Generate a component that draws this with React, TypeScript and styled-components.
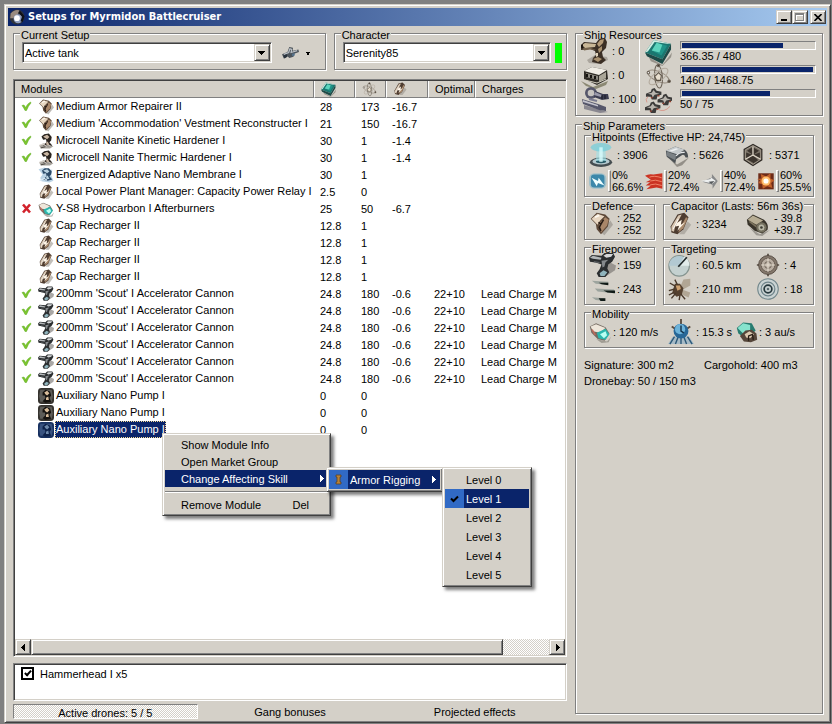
import React from "react";
import styled, { createGlobalStyle, css } from "styled-components";

const face = "#d4d0c8";
const navy = "#0a246a";

const raised = css`
  background: ${face};
  border: 1px solid;
  border-color: ${face} #404040 #404040 ${face};
  box-shadow: inset 1px 1px #fff, inset -1px -1px #808080;
`;

const sunken = css`
  border: 1px solid;
  border-color: #808080 #fff #fff #808080;
  box-shadow: inset 1px 1px #404040, inset -1px -1px ${face};
  padding: 1px;
`;

const checker = css`
  background: repeating-conic-gradient(#fff 0 25%, ${face} 0 50%) 0 0 / 2px 2px;
`;

const GlobalStyle = createGlobalStyle`
  *, *::before, *::after { box-sizing: border-box; }
  body { margin: 0; background: #808080; }
  body, button, select, input, table {
    font: 11px/12px "Liberation Sans", Arial, sans-serif;
    color: #000;
  }
  button { padding: 0; border: 0; background: none; }
`;

const Desktop = styled.div`
  min-height: 100vh;
  padding: 4px 1px 1px 4px;
  display: flex;
`;

const Window = styled.main`
  flex: 1;
  min-width: 0;
  display: flex;
  flex-direction: column;
  padding: 3px;
  ${raised}
`;

const TitleBar = styled.header`
  height: 18px;
  display: flex;
  align-items: center;
  gap: 2px;
  padding: 0 1px;
  background: linear-gradient(90deg, ${navy}, #a6caf0);
`;

const Title = styled.h1`
  flex: 1;
  margin: 0;
  padding-left: 1px;
  color: #fff;
  font: bold 11px/16px "DejaVu Sans Condensed", "DejaVu Sans", sans-serif;
`;

const CaptionGroup = styled.div`
  display: flex;
`;

const CaptionButton = styled.button`
  ${raised}
  width: 16px;
  height: 14px;
  display: grid;
  place-items: center;
`;

const Client = styled.div`
  flex: 1;
  display: grid;
  grid-template-columns: minmax(0, 1fr) 248px;
  gap: 8px;
  padding: 0 4px 0 5px;
`;

const MainColumn = styled.section`
  display: flex;
  flex-direction: column;
  min-width: 0;
`;

const SideColumn = styled.aside`
  display: flex;
  flex-direction: column;
  gap: 1px;
  padding-bottom: 5px;
`;

const Group = styled.fieldset<{ $grow?: number; $pad?: string }>`
  min-width: 0;
  margin: 0;
  padding: ${(p) => p.$pad ?? "0 4px 3px"};
  border: 1px solid #808080;
  box-shadow: 1px 1px #fff, inset 1px 1px #fff;
  ${(p) => p.$grow && `flex: ${p.$grow} 1 0;`}
`;

const Legend = styled.legend<{ $inset?: number }>`
  margin-left: ${(p) => p.$inset ?? 2}px;
  padding: 3px 1px 0;
  height: 15px;
  line-height: 12px;
  white-space: nowrap;
  background: linear-gradient(${face}, ${face}) 0 100% / 100% 11px no-repeat;
`;

const Selectors = styled.div`
  display: flex;
  gap: 8px;
  margin-bottom: 9px;
`;

const ControlRow = styled.div`
  display: flex;
  align-items: center;
  gap: 4px;
  padding-top: 1px;
`;

const Combo = styled.div`
  ${sunken}
  flex: 1;
  min-width: 0;
  height: 21px;
  display: flex;
  background: #fff;
`;

const ComboSelect = styled.select`
  flex: 1;
  min-width: 0;
  appearance: none;
  border: 0;
  padding: 0 1px;
  background: #fff;
  outline: 0;
`;

const ComboArrow = styled.span`
  ${raised}
  width: 16px;
  display: grid;
  place-items: center;
  pointer-events: none;
`;

const SetupMenuButton = styled.button`
  width: 41px;
  height: 20px;
  display: flex;
  align-items: center;
  gap: 6px;
  padding-left: 6px;
`;

const StatusLight = styled.span`
  width: 7px;
  height: 20px;
  background: #0f0;
`;

const ModuleList = styled.div`
  ${sunken}
  flex: 1;
  display: flex;
  flex-direction: column;
  background: #fff;
`;

const ListBody = styled.div`
  flex: 1;
  overflow: hidden;
`;

const ModuleTable = styled.table`
  width: 100%;
  table-layout: fixed;
  border-collapse: separate;
  border-spacing: 0;
`;

const HeadCell = styled.th<{ $w?: number }>`
  ${(p) => p.$w && `width: ${p.$w}px;`}
  height: 17px;
  padding: 0 0 0 6px;
  background: ${face};
  border-left: 1px solid #fff;
  border-right: 1px solid #808080;
  border-bottom: 1px solid #808080;
  font-weight: normal;
  text-align: left;
  white-space: nowrap;
  line-height: 12px;
  svg { display: block; }
  &:first-child { border-left: 0; }
  &:last-child { border-right: 0; }
`;

const Cell = styled.td`
  height: 17px;
  padding: 0 0 0 6px;
  white-space: nowrap;
  overflow: hidden;
`;

const NameCell = styled.td`
  position: relative;
  height: 17px;
  padding: 0 0 0 6px;
`;

const NameLine = styled.div`
  display: grid;
  grid-template-columns: 16px 16px max-content;
  align-items: center;
  height: 17px;
  column-gap: 1px;
  margin-right: -10px;
  svg { display: block; }
`;

const ModuleName = styled.span<{ $selected?: boolean }>`
  padding: 2px 0;
  line-height: 11px;
  white-space: nowrap;
  border: 1px solid transparent;
  ${(p) =>
    p.$selected &&
    css`
      background: ${navy};
      color: #fff;
      border: 1px dotted #f5db95;
    `}
`;

const ScrollBar = styled.div`
  height: 16px;
  display: flex;
  ${checker}
`;

const ScrollButton = styled.button`
  ${raised}
  width: 16px;
  display: grid;
  place-items: center;
`;

const ScrollThumb = styled.div`
  ${raised}
  flex: 473;
`;

const ScrollTrack = styled.div`
  flex: 46;
`;

const DronePanel = styled.div`
  ${sunken}
  height: 38px;
  margin: 6px 0 3px;
  background: #fff;
`;

const DroneLabel = styled.label`
  display: flex;
  align-items: center;
  gap: 6px;
  padding: 2px 6px;
`;

const DroneCheck = styled.input`
  appearance: none;
  width: 13px;
  height: 13px;
  margin: 0;
  border: 2px solid #000;
  display: grid;
  place-items: center;
  &:checked::after {
    content: "";
    width: 4px;
    height: 7px;
    margin-bottom: 2px;
    border: solid #000;
    border-width: 0 2px 2px 0;
    transform: rotate(42deg);
  }
`;

const TabBar = styled.nav`
  display: grid;
  grid-template-columns: repeat(3, 1fr);
`;

const TabButton = styled.button<{ $active?: boolean }>`
  height: 15px;
  border: 1px solid transparent;
  ${(p) =>
    p.$active &&
    css`
      ${checker}
      border-color: #808080 #fff #fff #808080;
      padding-top: 2px;
    `}
`;

const MenuPanel = styled.ul<{ $place: "context" | "side"; $shift?: number; $width: number }>`
  ${raised}
  position: absolute;
  z-index: 2;
  margin: 0;
  padding: 2px;
  list-style: none;
  width: ${(p) => p.$width}px;
  box-shadow: inset 1px 1px #fff, inset -1px -1px #808080, 3px 3px 3px rgba(0, 0, 0, 0.5);
  ${(p) =>
    p.$place === "context"
      ? css`
          top: 12px;
          left: 147px;
        `
      : css`
          top: -3px;
          left: calc(100% + ${p.$shift ?? 0}px);
        `}
`;

const MenuEntry = styled.li`
  position: relative;
`;

const MenuItem = styled.button<{ $hot?: boolean; $tall?: boolean }>`
  width: 100%;
  height: ${(p) => (p.$tall ? 19 : 17)}px;
  display: grid;
  grid-template-columns: ${(p) => (p.$tall ? "19px 1fr auto" : "16px 1fr auto")};
  align-items: center;
  text-align: left;
  white-space: nowrap;
  ${(p) => p.$hot && `background: ${navy}; color: #fff;`}
`;

const MenuMark = styled.span<{ $hot?: boolean }>`
  align-self: stretch;
  display: grid;
  place-items: center;
  ${(p) => p.$hot && "background: #316ac5;"}
`;

const MenuText = styled.span<{ $wide?: boolean }>`
  padding-left: ${(p) => (p.$wide ? 2 : 0)}px;
`;

const Shortcut = styled.span`
  padding-right: 19px;
`;

const ArrowSlot = styled.span`
  padding-right: 3px;
  display: grid;
`;

const Separator = styled.li`
  height: 9px;
  display: flex;
  align-items: center;
  &::before {
    content: "";
    flex: 1;
    height: 2px;
    border-top: 1px solid #808080;
    border-bottom: 1px solid #fff;
  }
`;

const Resources = styled.div`
  display: grid;
  grid-template-columns: 59px 40px 1fr;
  grid-auto-rows: 24px;
  margin-top: -2px;
  padding-right: 2px;
`;

const Slots = styled.div`
  display: flex;
  align-items: center;
  gap: 3px;
  border-right: 1px solid #fff;
  white-space: nowrap;
`;

const IconSlot = styled.div`
  display: grid;
  place-items: center start;
  padding-left: 5px;
  height: 24px;
`;

const Meter = styled.div`
  display: flex;
  flex-direction: column;
  padding-top: 2px;
  line-height: 13px;
`;

const MeterTrack = styled.div`
  height: 9px;
  padding: 1px;
  border: 1px solid;
  border-color: #808080 #fff #fff #808080;
`;

const MeterFill = styled.div`
  height: 100%;
  background: ${navy};
`;

const Parameters = styled.div`
  margin-top: -4px;
`;

const PairRow = styled.div`
  display: grid;
  grid-template-columns: 71px 1fr;
  gap: 0 8px;
`;

const StatGrid = styled.div<{ $cols: string; $lift?: boolean }>`
  display: grid;
  grid-template-columns: ${(p) => p.$cols};
  grid-auto-rows: 24px;
  ${(p) => p.$lift && "margin-top: -2px;"}
`;

const Stat = styled.div<{ $gap?: number }>`
  display: flex;
  align-items: center;
  gap: ${(p) => p.$gap ?? 4}px;
  white-space: nowrap;
  svg { flex: none; display: block; }
`;

const Lines = styled.div`
  display: flex;
  flex-direction: column;
`;

const ResistRow = styled.div`
  display: grid;
  grid-template-columns: 56px 56px 56px 1fr;
  padding-top: 2px;
`;

const ResistBar = styled.span`
  width: 3px;
  height: 22px;
  border: 1px solid;
  border-color: #fff #808080 #808080 #fff;
`;

const Footnotes = styled.div`
  display: grid;
  grid-template-columns: 120px 1fr;
  padding-top: 9px;
  line-height: 16px;
`;

/* ---------- drawings ---------- */

const art: Record<string, React.ReactNode> = {
  turret: (
    <>
      <path d="M6 23l8-5 12 2 1 3-9 4-10-1z" fill="#8d8880" opacity=".6" />
      <path d="M0 8l3-3 12 1 3-4 6-1 2 4-1 6-4 4 1 5 3 3-5 4-9-2 1-4 3-3-1-4-5-2-9 1z" fill="#3b2f25" />
      <path d="M1 8l3-2 11 1-1 3-10 1z" fill="#c9b797" />
      <path d="M16 7l3-4 4-1-1 4-4 4z" fill="#b39a78" />
      <path d="M2 11l8 0 5 2-6-.500-6 1z" fill="#75634d" />
      <path d="M17 12l4-3 0 4-3 3zM12 22l5-2 4 2-4 3z" fill="#a8906e" />
      <path d="M15 16l2 0 0 3-2 1z" fill="#e0d3ba" />
      <path d="M0 8l2-1 0 4-2 0z" fill="#1c1611" />
    </>
  ),
  gun: (
    <>
      <path d="M14 19l8-8 6 3-1 5-9 6z" fill="#6f6d69" opacity=".6" />
      <path d="M0 6l3-3 10 1 3-3 9 0 2 4-3 5-4 3-1 4 2 4-4 5-7 0-2-4 3-4 2-5-6-2-6-1z" fill="#2b2e30" />
      <path d="M1 6l3-2 9 2-1 2-8-1z" fill="#b2b6b8" />
      <path d="M15 4l3-2 7 0-2 3-5 1z" fill="#d6d8d9" />
      <path d="M13 9l7-1-3 3-1 4-2 1z" fill="#85898c" />
      <path d="M11 22l4-3 4 2-3 4-4 0z" fill="#8fb3bc" />
      <path d="M5 10l6 1" stroke="#5d6163" strokeWidth="1.5" />
    </>
  ),
  launcher: (
    <>
      <path d="M0 20l12 6 15-6-2 4-10 4-10-3z" fill="#5c5a3c" opacity=".6" />
      <path d="M3 10l8-4 15 3 1 9-11 6L3 18z" fill="#302d27" />
      <path d="M3 10l8-4 15 3-8 5z" fill="#f0ede5" />
      <path d="M5 12l12 3 0 4-12-3z" fill="#8b887f" />
      <path d="M6 13v3M10 14v3M14 15v3" stroke="#15130f" strokeWidth="2" />
      <path d="M18 15l7-4 0 6-7 4z" fill="#aaa698" />
      <path d="M4 19l12 3 9-4" stroke="#d0ccbd" strokeWidth="1" fill="none" />
    </>
  ),
  calibration: (
    <>
      <path d="M3 20l20 6 4 1-8 1-16-4z" fill="#8a8890" />
      <circle cx="10" cy="8" r="6" fill="#55566a" />
      <circle cx="10" cy="8" r="3.3" fill="#c7c4c0" />
      <path d="M14 6l8 3 5 0 1 5-7 1-8-3z" fill="#3c3d50" />
      <path d="M14 7l7 3-1 2-7-2z" fill="#9a9aab" />
      <path d="M1 14l16 5 8 3 0 4-7-1L2 19z" fill="#55566a" />
      <path d="M2 15l15 5 0 1.500L2 17z" fill="#c2c2cc" />
      <path d="M21 10v4M24 10v4" stroke="#151620" strokeWidth="1" />
      <path d="M8 14l8 2" stroke="#7a7b90" strokeWidth="2" />
    </>
  ),
  cpu: (
    <>
      <path d="M4 19l14 8 10-13-1 5-9 9-12-5z" fill="#6f6b62" opacity=".6" />
      <path d="M0 14L9 1l18 4-9 16z" fill="#1b7770" />
      <path d="M0 14l18 7v5L2 18zM18 21l9-16v6l-9 15z" fill="#1d4a47" />
      <path d="M0 14L9 1l18 4-4 0-13-2-7 10z" fill="#d0ece2" />
      <path d="M7 12l5-8 11 3-6 10z" fill="#1f9488" />
      <path d="M7 12l5-8 6 2-3 8z" fill="#5cd4bd" />
    </>
  ),
  power: (
    <g fill="none" stroke="#6d6459" strokeWidth="1.1">
      <ellipse cx="14" cy="14" rx="12" ry="5" transform="rotate(25 14 14)" stroke="#958b7e" />
      <ellipse cx="14" cy="14" rx="12" ry="4" transform="rotate(85 14 14)" />
      <ellipse cx="14" cy="14" rx="12" ry="5" transform="rotate(140 14 14)" stroke="#b5aca0" />
      <path d="M14 10l3 3-1 5-4 0-2-4z" fill="#e8dfcf" stroke="#5d5347" />
      <circle cx="14" cy="2.5" r="1.300" fill="#443b31" />
      <circle cx="3.500" cy="10" r="1.300" fill="#fff" />
      <circle cx="25" cy="19" r="1.300" fill="#443b31" />
    </g>
  ),
  drones: (
    <>
      {[[9, 6], [21, 12], [8, 20]].map(([x, y]) => (
        <g key={x} transform={`translate(${x} ${y})`}>
          <path d="M-8 1l5-2 1-3 3-1 2 3 5 1 0 3-4 1-1 4-5 0-1-3-5 0z" fill="#3c3b3a" />
          <path d="M-6 1l4-1 2-3 2 3 4 1-5 1-2 3-1-3z" fill="#b9b5ae" />
          <path d="M-3 5h2M4 3h2" stroke="#93402f" strokeWidth="1.500" />
        </g>
      ))}
      <path d="M13 23q7 4 13-3M3 10q-3 3-1 6" stroke="#d6988b" strokeWidth="1" fill="none" />
    </>
  ),
  shield: (
    <>
      <ellipse cx="14" cy="22.500" rx="13" ry="5.500" fill="#454d50" />
      <ellipse cx="14" cy="21.500" rx="10" ry="3.500" fill="#b5c9ce" />
      <ellipse cx="14" cy="21.500" rx="6" ry="2" fill="#2a5c68" />
      <path d="M9 5h10l1 16H8z" fill="#9fe3e9" opacity=".6" />
      <ellipse cx="14" cy="5" rx="12" ry="5" fill="#71cfdc" opacity=".7" />
      <path d="M12 5h4v17h-4z" fill="#d8fbfc" opacity=".8" />
    </>
  ),
  armor: (
    <>
      <path d="M5 18l9 7 14-8-8 9-6 2z" fill="#77736c" opacity=".7" />
      <path d="M1 9l11-5 11 4q4 3 4 9l-3 0q-1-4-4-3l-7 5-1 5L2 16z" fill="#4c5155" />
      <path d="M1 9l11-5 11 4-9 5z" fill="#c5cacc" />
      <path d="M2 10l11 4-1 6-10-5z" fill="#7b8185" />
      <path d="M13 15q4-5 10-4" stroke="#e8eaec" strokeWidth="1.500" fill="none" />
      <path d="M5 9l8-3 3 1-8 3z" fill="#eceeef" />
    </>
  ),
  structure: (
    <>
      <path d="M14 1l11 6v13l-11 7L3 20V7z" fill="#302b26" />
      <path d="M14 3l9 5v11l-9 6-9-6V8z" fill="#7b7368" stroke="#aca395" strokeWidth="1" />
      <path d="M14 14V5l7 4zM14 14l8-3v7zM14 14l6 6-6 4zM14 14v9l-7-4zM14 14l-8 4v-7zM14 14L7 9l6-4z" fill="#3b342d" />
      <path d="M14 4v10l9 5M14 14l-9 5" stroke="#d9d1c3" strokeWidth="1.500" fill="none" />
    </>
  ),
  em: (
    <>
      <rect x="0" y="2" width="27" height="24" rx="8" fill="#6ab2cd" opacity=".45" />
      <rect x="3" y="4" width="21" height="20" rx="5" fill="#2a7ea4" opacity=".85" />
      <path d="M4 9l10 5 1-5 9 12-10-4-2 5z" fill="#f1ffff" />
    </>
  ),
  thermal: (
    <>
      <path d="M0 6q6-4 13-2l14-2v24l-9-2-16 3 7-6-8 0 7-5-7 0 8-4z" fill="#cb3323" />
      <path d="M7 8q7-3 19 1M8 14q8-3 18 1M8 20q8-3 18 1" stroke="#f0866a" strokeWidth="1.500" fill="none" />
    </>
  ),
  kinetic: (
    <>
      <path d="M2 15L17 8V3l9 11-8 12v-6z" fill="#74777a" opacity=".8" />
      <path d="M0 14l15-3 0-3 8 6-8 6v-3z" fill="#eef0f0" />
      <path d="M12 15l9-1-5 5z" fill="#55595c" />
    </>
  ),
  explosive: (
    <>
      <rect x="2" y="2" width="24" height="25" fill="#6d2b18" />
      <path d="M0 11l7-1-1-7 8 4 7-5 0 8 6 3-5 4 2 8-8-3-7 4-1-7-6-2 3-4z" fill="#c2612a" />
      <circle cx="14" cy="14" r="7" fill="#ffbe6b" />
      <circle cx="14" cy="14" r="4" fill="#fff" />
    </>
  ),
  repair: (
    <>
      <path d="M14 24l11-14 3 5-10 12z" fill="#8f8b83" opacity=".6" />
      <path d="M2 8l7-7 10 2 5 5-2 9-8 9-5-6-1-6z" fill="#5e4939" />
      <path d="M3 8l7-6 8 3-5 5-3 5z" fill="#e8d7c2" />
      <path d="M12 13l7-7 4 3-2 7-7 8z" fill="#a98669" />
      <path d="M11 12l3 2-2 4 2 4M17 9l-3 5" stroke="#281b14" strokeWidth="1.800" fill="none" />
      <path d="M7 6l5-2" stroke="#fffaf2" strokeWidth="2" />
    </>
  ),
  hardener: (
    <>
      <path d="M2 22l8-4 17 5-6 4H5z" fill="#a5a19a" />
      <path d="M6 6l5-4 8-1 5 6-1 6-3 3 5 6-8 2-8-2 6-6-1-5-5 1z" fill="#29231f" />
      <path d="M9 6l7-3 4 4-4 4-5-3zM14 17l3-2 3 6-5 0z" fill="#c9b6a3" />
      <path d="M2 22l7-3 5 4 8-1" stroke="#d8d3cc" strokeWidth="2" fill="none" />
      <path d="M5 26l8-2" stroke="#3d3833" strokeWidth="1.500" />
    </>
  ),
  membrane: (
    <>
      <path d="M1 4l10-3 6 4 8 0-2 9 4 10-7 3-14-2-2-6 4-6z" fill="#8db6d4" opacity=".6" />
      <path d="M7 6l5-4 7 0 5 6-1 5-3 3 5 6-8 2-8-2 6-6-1-5-5 1z" fill="#2c4a68" />
      <path d="M9 6l7-2 4 4-4 3-5-3zM14 17l3-2 3 6-5 0z" fill="#b7d0e0" />
      <path d="M3 24l8-4 5 3" stroke="#dcebf5" strokeWidth="2" fill="none" />
    </>
  ),
  cap: (
    <>
      <path d="M13 26L23 11l4 4-8 11z" fill="#99958c" opacity=".6" />
      <path d="M3 17L11 3l8-2 5 5-6 14-7 6-7-2z" fill="#4e3c30" />
      <path d="M4 17l8-13 4-1-8 15-1 5-3-1z" fill="#d9c7b2" />
      <path d="M13 20l8-14 2 1-5 12-6 5z" fill="#a98a6d" />
      <path d="M10 13l6-4-1 6 5-3-9 10 2-6-4 1z" fill="#fff6e8" />
      <path d="M6 20l6-12" stroke="#fff" strokeWidth="1" />
    </>
  ),
  battery: (
    <>
      <path d="M4 18l12 8 12-5-9 7-7-1z" fill="#77736c" opacity=".6" />
      <path d="M1 9l7-6 13 6q6 5 4 12l-6 4-9-3-8-7z" fill="#38332a" />
      <path d="M2 9l6-5 12 6-8 5z" fill="#b7ad94" />
      <circle cx="18" cy="18" r="6" fill="#74705f" />
      <circle cx="18" cy="18" r="3.500" fill="#b9b7a6" />
      <circle cx="18" cy="18" r="1.500" fill="#3b3a32" />
      <path d="M4 11l8 6" stroke="#7c735d" strokeWidth="2" />
    </>
  ),
  volley: (
    <>
      <path d="M3 5l17 1v3l-13-1zM6 13l20 1v4l-17-2zM3 22l13 1v3l-9-1z" fill="#8f9894" opacity=".8" />
      <path d="M10 7h10v2.500l-7-1zM15 15h12v3l-8-1zM10 23h7v3h-5z" fill="#101a17" />
    </>
  ),
  radar: (
    <>
      <circle cx="13" cy="15" r="12" fill="#c4d1d0" stroke="#84938f" strokeWidth="1.300" />
      <path d="M1 15a12 12 0 0 1 18-10l-6 10z" fill="#b2c9d2" />
      <path d="M13 15L19 4a12 12 0 0 1 6 11z" fill="#e2eceb" />
      <path d="M12 16l10-11" stroke="#20292b" strokeWidth="2" />
    </>
  ),
  fly: (
    <>
      <path d="M14 12l4-9 8-1 0 8-9 5 9 3-2 6-9-4z" fill="#b1a695" />
      <path d="M8 8l6 0 4 5-2 8-6 2-5-5z" fill="#54402f" />
      <path d="M8 3l3 6M2 7l7 4M1 16l7-2M4 25l5-6M13 27l1-6M20 26l-5-6M1 21l6-3" stroke="#49382a" strokeWidth="1.600" />
      <path d="M9 10l5 0 1 4-4 2z" fill="#cda171" />
    </>
  ),
  sensor: (
    <>
      <path d="M14 1v26M1 14h26" stroke="#554b41" strokeWidth="2" />
      <circle cx="14" cy="14" r="11" fill="#85796d" stroke="#4d433a" />
      <circle cx="14" cy="14" r="8" fill="#b9aea2" stroke="#61554b" />
      <circle cx="14" cy="14" r="4" fill="none" stroke="#665b50" />
      <path d="M14 6v16M6 14h16" stroke="#e4dbce" strokeWidth="1.300" />
    </>
  ),
  rings: (
    <g fill="none" stroke="#506267">
      <circle cx="14" cy="14" r="12" fill="#c9d2d2" stroke="#71868b" strokeWidth="1.200" />
      <circle cx="14" cy="14" r="8" stroke="#6e8389" strokeWidth="1.400" />
      <circle cx="14" cy="14" r="4.500" stroke="#26383d" strokeWidth="2" />
      <circle cx="14" cy="14" r="1" fill="#1d2b30" />
    </g>
  ),
  thruster: (
    <>
      <path d="M9 23l14 3 5-6-3 7-9 1z" fill="#7f7b72" opacity=".6" />
      <path d="M1 7l8-4 12 5 5 8-6 9-9-2-8-8z" fill="#756b62" />
      <path d="M2 7l7-3 12 5-7 6-9-2z" fill="#eee6da" />
      <path d="M10 15l11-5 5 7-5 7-9-2z" fill="#2bb6ad" />
      <path d="M14 17l7-4 2 5-4 4z" fill="#bafff3" />
      <path d="M4 11l4 7" stroke="#c0695a" strokeWidth="2" />
    </>
  ),
  align: (
    <>
      <path d="M14 0v8M4 8l6 4M24 8l-6 4" stroke="#5b4c40" strokeWidth="2" />
      <path d="M5 19h18l5 8H0z" fill="#a6bac6" />
      <path d="M7 19l-5 8M11 19l-3 8M14 19v8M17 19l3 8M21 19l5 8" stroke="#2b5878" strokeWidth="1.500" />
      <circle cx="14" cy="13" r="8" fill="#276797" />
      <circle cx="13" cy="11" r="5.500" fill="#6db3da" />
      <path d="M14 7v6l3 2" stroke="#123149" strokeWidth="1.500" fill="none" />
    </>
  ),
  warp: (
    <>
      <path d="M1 9l8-7 11 1 5 9-8 8-8 0-6-4z" fill="#287c70" />
      <path d="M2 9l7-6 9 2 0 7-8 5z" fill="#86e3cd" />
      <path d="M5 19l7-7 8-1 6 5 1 8-8 3-9-1z" fill="#55463a" />
      <path d="M11 17l6-4 6 4-5 5-5-1z" fill="#dbc9af" />
      <path d="M16 25v-6l5-2 1 7" stroke="#251b14" strokeWidth="1.600" fill="none" />
    </>
  ),
  pump: (
    <>
      <rect x="0" y="0" width="28" height="28" rx="6" fill="#36332f" />
      <path d="M4 3h20l2 12-2 9H4L2 14z" fill="#5d5c58" />
      <path d="M8 8l5-5 8 3 2 7-3 4 3 7-10 2-5-3 5-5-1-5-4 0z" fill="#15120f" />
      <path d="M11 8l5-3 4 4-4 4-3-2zM14 17l4-2 1 6-5 0z" fill="#d9bd9b" />
    </>
  ),
  pumpSelected: (
    <>
      <rect x="0" y="0" width="28" height="28" rx="6" fill="#17305f" />
      <path d="M4 3h20l2 12-2 9H4L2 14z" fill="#38527f" />
      <path d="M8 8l5-5 8 3 2 7-3 4 3 7-10 2-5-3 5-5-1-5-4 0z" fill="#0d2149" />
      <path d="M11 8l5-3 4 4-4 4-3-2zM14 17l4-2 1 6-5 0z" fill="#6d88aa" />
    </>
  ),
  setup: (
    <>
      <path d="M0 17l9-4 3-8 6 1 0 5 9-2 1 4-8 3-1 5-7 2-3-3-6 4z" fill="#4c535a" />
      <path d="M3 17l8-3 2-6 3 1-1 5 10-3" stroke="#bbc1c7" strokeWidth="2" fill="none" />
      <path d="M2 19l6-2 1 4-5 3z" fill="#28323c" />
      <path d="M16 16l5-1 0 4-4 1z" fill="#55718a" />
    </>
  ),
  app: (
    <>
      <circle cx="14" cy="14" r="13" fill="#30343c" />
      <path d="M3 8q6-8 15-6l-3 9-8 5-5 0z" fill="#998b80" />
      <circle cx="16" cy="17" r="8" fill="#8f9fc0" />
      <circle cx="14" cy="16" r="5" fill="#fff" />
      <path d="M18 5l7 8-3 9" stroke="#0f1218" strokeWidth="4" fill="none" />
    </>
  ),
};

const Art = ({ name, size = 24 }: { name: string; size?: number }) => (
  <svg width={size} height={size} viewBox="0 0 28 28" aria-hidden="true">
    {art[name]}
  </svg>
);

const Triangle = ({ dir, color = "#000", size = 7 }: { dir: "left" | "right" | "down"; color?: string; size?: number }) => (
  <svg width={size} height={size} viewBox="0 0 7 7" aria-hidden="true" shapeRendering="crispEdges">
    <path d={{ left: "M5 0v7L1 3.500z", right: "M2 0v7l4-3.500z", down: "M0 2h7L3.500 6z" }[dir]} fill={color} />
  </svg>
);

const StateMark = ({ state }: { state?: "on" | "off" }) => {
  if (!state) return <span />;
  return (
    <svg width="11" height="11" viewBox="0 0 11 11" aria-hidden="true">
      {state === "on" ? (
        <path d="M1 4.500L3 4l1.500 2.500Q6 3 9.500 1L10 2Q7 5 5.500 9.500L4 9.500Q3 7 1 4.500z" fill="#7cc62e" stroke="#5aa81f" strokeWidth=".5" />
      ) : (
        <path d="M2 1.500l7 8M9 1.500l-7 8" stroke="#d2222c" strokeWidth="2.600" />
      )}
    </svg>
  );
};

/* ---------- data ---------- */

type Module = {
  state?: "on" | "off";
  icon: string;
  name: string;
  cpu: string;
  power: string;
  cap?: string;
  optimal?: string;
  charges?: string;
  selected?: boolean;
};

const recharger: Module = { icon: "cap", name: "Cap Recharger II", cpu: "12.8", power: "1" };
const cannon: Module = {
  state: "on",
  icon: "gun",
  name: "200mm 'Scout' I Accelerator Cannon",
  cpu: "24.8",
  power: "180",
  cap: "-0.6",
  optimal: "22+10",
  charges: "Lead Charge M",
};
const pump: Module = { icon: "pump", name: "Auxiliary Nano Pump I", cpu: "0", power: "0" };

const modules: Module[] = [
  { state: "on", icon: "repair", name: "Medium Armor Repairer II", cpu: "28", power: "173", cap: "-16.7" },
  { state: "on", icon: "repair", name: "Medium 'Accommodation' Vestment Reconstructer I", cpu: "21", power: "150", cap: "-16.7" },
  { state: "on", icon: "hardener", name: "Microcell Nanite Kinetic Hardener I", cpu: "30", power: "1", cap: "-1.4" },
  { state: "on", icon: "hardener", name: "Microcell Nanite Thermic Hardener I", cpu: "30", power: "1", cap: "-1.4" },
  { icon: "membrane", name: "Energized Adaptive Nano Membrane I", cpu: "30", power: "1" },
  { icon: "cap", name: "Local Power Plant Manager: Capacity Power Relay I", cpu: "2.5", power: "0" },
  { state: "off", icon: "thruster", name: "Y-S8 Hydrocarbon I Afterburners", cpu: "25", power: "50", cap: "-6.7" },
  ...Array(4).fill(recharger),
  ...Array(6).fill(cannon),
  pump,
  pump,
  { ...pump, icon: "pumpSelected", selected: true },
];

const resources = [
  { slot: "turret", free: "0", icon: "cpu", used: 366.35, total: 480 },
  { slot: "launcher", free: "0", icon: "power", used: 1460, total: 1468.75 },
  { slot: "calibration", free: "100", icon: "drones", used: 50, total: 75 },
];

const resists = [
  ["em", "0%", "66.6%"],
  ["thermal", "20%", "72.4%"],
  ["kinetic", "40%", "72.4%"],
  ["explosive", "60%", "25.5%"],
];

const ContextMenu = () => (
  <MenuPanel $place="context" $width={169} role="menu">
    {["Show Module Info", "Open Market Group"].map((t) => (
      <MenuEntry key={t}>
        <MenuItem role="menuitem"><span /><MenuText>{t}</MenuText></MenuItem>
      </MenuEntry>
    ))}
    <MenuEntry>
      <MenuItem $hot role="menuitem">
        <span />
        <MenuText>Change Affecting Skill</MenuText>
        <ArrowSlot><Triangle dir="right" color="#fff" /></ArrowSlot>
      </MenuItem>
      <MenuPanel $place="side" $shift={-2} $width={117} role="menu">
        <MenuEntry>
          <MenuItem $hot $tall role="menuitem">
            <MenuMark $hot>
              <svg width="7" height="11" viewBox="0 0 7 11" aria-hidden="true">
                <path d="M1 1h5v2H5v5h1v2H1V8h1V3H1z" fill="#b98235" stroke="#5c4325" strokeWidth=".8" />
              </svg>
            </MenuMark>
            <MenuText $wide>Armor Rigging</MenuText>
            <ArrowSlot><Triangle dir="right" color="#fff" /></ArrowSlot>
          </MenuItem>
          <MenuPanel $place="side" $shift={2} $width={90} role="menu">
            {[0, 1, 2, 3, 4, 5].map((n) => (
              <MenuEntry key={n}>
                <MenuItem $tall $hot={n === 1} role="menuitemradio" aria-checked={n === 1}>
                  <MenuMark $hot={n === 1}>
                    {n === 1 && (
                      <svg width="9" height="8" viewBox="0 0 9 8" aria-hidden="true">
                        <path d="M1 3.500l2.500 2.500L8 1.500" fill="none" stroke="#000" strokeWidth="2" />
                      </svg>
                    )}
                  </MenuMark>
                  <MenuText $wide>Level {n}</MenuText>
                </MenuItem>
              </MenuEntry>
            ))}
          </MenuPanel>
        </MenuEntry>
      </MenuPanel>
    </MenuEntry>
    <Separator role="separator" />
    <MenuEntry>
      <MenuItem role="menuitem"><span /><MenuText>Remove Module</MenuText><Shortcut>Del</Shortcut></MenuItem>
    </MenuEntry>
  </MenuPanel>
);

const ModuleRow = ({ m }: { m: Module }) => (
  <tr>
    <NameCell>
      <NameLine>
        <StateMark state={m.state} />
        <Art name={m.icon} size={16} />
        <ModuleName $selected={m.selected}>{m.name}</ModuleName>
      </NameLine>
      {m.selected && <ContextMenu />}
    </NameCell>
    <Cell>{m.cpu}</Cell>
    <Cell>{m.power}</Cell>
    <Cell>{m.cap}</Cell>
    <Cell>{m.optimal}</Cell>
    <Cell>{m.charges}</Cell>
  </tr>
);

const IconStat = ({ icon, children, size = 24, gap }: { icon: string; children: React.ReactNode; size?: number; gap?: number }) => (
  <Stat $gap={gap}>
    <Art name={icon} size={size} />
    {children}
  </Stat>
);

export default function App() {
  return (
    <>
      <GlobalStyle />
      <Desktop>
        <Window>
          <TitleBar>
            <Art name="app" size={16} />
            <Title>Setups for Myrmidon Battlecruiser</Title>
            <CaptionGroup>
              <CaptionButton aria-label="Minimize">
                <svg width="10" height="8" viewBox="0 0 10 8"><path d="M2 6h6v2H2z" /></svg>
              </CaptionButton>
              <CaptionButton aria-label="Maximize" disabled>
                <svg width="10" height="9" viewBox="0 0 10 9" shapeRendering="crispEdges">
                  <path d="M1 1h9v8H1z M2 3h7v5H2z" fill="#fff" fillRule="evenodd" />
                  <path d="M0 0h9v8H0z M1 2h7v5H1z" fill="#808080" fillRule="evenodd" />
                </svg>
              </CaptionButton>
            </CaptionGroup>
            <CaptionButton aria-label="Close">
              <svg width="8" height="7" viewBox="0 0 8 7"><path d="M.5 0l7 7M7.500 0l-7 7" stroke="#000" strokeWidth="1.600" /></svg>
            </CaptionButton>
          </TitleBar>

          <Client>
            <MainColumn>
              <Selectors>
                <Group $grow={313} $pad="0 8px 6px">
                  <Legend $inset={-2}><label htmlFor="setup">Current Setup</label></Legend>
                  <ControlRow>
                    <Combo>
                      <ComboSelect id="setup" defaultValue="Active tank"><option>Active tank</option></ComboSelect>
                      <ComboArrow><Triangle dir="down" /></ComboArrow>
                    </Combo>
                    <SetupMenuButton aria-label="Setup actions">
                      <Art name="setup" size={17} />
                      <Triangle dir="down" size={6} />
                    </SetupMenuButton>
                  </ControlRow>
                </Group>
                <Group $grow={233} $pad="0 4px 6px 8px">
                  <Legend $inset={-2}><label htmlFor="character">Character</label></Legend>
                  <ControlRow>
                    <Combo>
                      <ComboSelect id="character" defaultValue="Serenity85"><option>Serenity85</option></ComboSelect>
                      <ComboArrow><Triangle dir="down" /></ComboArrow>
                    </Combo>
                    <StatusLight />
                  </ControlRow>
                </Group>
              </Selectors>

              <ModuleList>
                <ListBody>
                  <ModuleTable>
                    <thead>
                      <tr>
                        <HeadCell $w={299}>Modules</HeadCell>
                        <HeadCell $w={41} aria-label="CPU"><Art name="cpu" size={15} /></HeadCell>
                        <HeadCell $w={31} aria-label="Powergrid"><Art name="power" size={15} /></HeadCell>
                        <HeadCell $w={42} aria-label="Capacitor"><Art name="cap" size={14} /></HeadCell>
                        <HeadCell $w={47}>Optimal</HeadCell>
                        <HeadCell>Charges</HeadCell>
                      </tr>
                    </thead>
                    <tbody>
                      {modules.map((m, i) => <ModuleRow key={i} m={m} />)}
                    </tbody>
                  </ModuleTable>
                </ListBody>
                <ScrollBar>
                  <ScrollButton aria-label="Scroll left"><Triangle dir="left" /></ScrollButton>
                  <ScrollThumb />
                  <ScrollTrack />
                  <ScrollButton aria-label="Scroll right"><Triangle dir="right" /></ScrollButton>
                </ScrollBar>
              </ModuleList>

              <DronePanel>
                <DroneLabel>
                  <DroneCheck type="checkbox" defaultChecked />
                  Hammerhead I x5
                </DroneLabel>
              </DronePanel>

              <TabBar>
                <TabButton $active>Active drones: 5 / 5</TabButton>
                <TabButton>Gang bonuses</TabButton>
                <TabButton>Projected effects</TabButton>
              </TabBar>
            </MainColumn>

            <SideColumn>
              <Group $pad="0 4px 4px 5px">
                <Legend>Ship Resources</Legend>
                <Resources>
                  {resources.map((r) => (
                    <React.Fragment key={r.icon}>
                      <Slots><Art name={r.slot} size={28} />: {r.free}</Slots>
                      <IconSlot><Art name={r.icon} size={27} /></IconSlot>
                      <Meter>
                        <MeterTrack><MeterFill style={{ width: `${(r.used / r.total) * 100}%` }} /></MeterTrack>
                        {r.used} / {r.total}
                      </Meter>
                    </React.Fragment>
                  ))}
                </Resources>
              </Group>

              <Group $grow={1} $pad="0 8px 4px">
                <Legend $inset={-2}>Ship Parameters</Legend>
                <Parameters>
                  <Group>
                    <Legend>Hitpoints (Effective HP: 24,745)</Legend>
                    <StatGrid $cols="76px 76px 1fr">
                      <IconStat icon="shield">: 3906</IconStat>
                      <IconStat icon="armor">: 5626</IconStat>
                      <IconStat icon="structure">: 5371</IconStat>
                    </StatGrid>
                    <ResistRow>
                      {resists.map(([icon, a, b]) => (
                        <Stat key={icon} $gap={1}>
                          <Art name={icon} size={18} />
                          <ResistBar />
                          <Lines><span>{a}</span><span>{b}</span></Lines>
                        </Stat>
                      ))}
                    </ResistRow>
                  </Group>
                  <PairRow>
                    <Group>
                      <Legend>Defence</Legend>
                      <StatGrid $cols="1fr">
                        <IconStat icon="repair" gap={4}><Lines><span>: 252</span><span>: 252</span></Lines></IconStat>
                      </StatGrid>
                    </Group>
                    <Group>
                      <Legend>Capacitor (Lasts: 56m 36s)</Legend>
                      <StatGrid $cols="78px 1fr">
                        <IconStat icon="cap">: 3234</IconStat>
                        <IconStat icon="battery"><Lines><span>- 39.8</span><span>+39.7</span></Lines></IconStat>
                      </StatGrid>
                    </Group>
                    <Group>
                      <Legend>Firepower</Legend>
                      <StatGrid $cols="1fr" $lift>
                        <IconStat icon="gun" size={27} gap={1}>: 159</IconStat>
                        <IconStat icon="volley" size={27} gap={1}>: 243</IconStat>
                      </StatGrid>
                    </Group>
                    <Group>
                      <Legend>Targeting</Legend>
                      <StatGrid $cols="88px 1fr" $lift>
                        <IconStat icon="radar">: 60.5 km</IconStat>
                        <IconStat icon="sensor">: 4</IconStat>
                        <IconStat icon="fly">: 210 mm</IconStat>
                        <IconStat icon="rings">: 18</IconStat>
                      </StatGrid>
                    </Group>
                  </PairRow>
                  <Group>
                    <Legend>Mobility</Legend>
                    <StatGrid $cols="79px 68px 1fr">
                      <IconStat icon="thruster" size={22} gap={2}>: 120 m/s</IconStat>
                      <IconStat icon="align" size={26} gap={2}>: 15.3 s</IconStat>
                      <IconStat icon="warp" size={22} gap={1}>: 3 au/s</IconStat>
                    </StatGrid>
                  </Group>
                  <Footnotes>
                    <span>Signature: 300 m2</span>
                    <span>Cargohold: 400 m3</span>
                    <span>Dronebay: 50 / 150 m3</span>
                  </Footnotes>
                </Parameters>
              </Group>
            </SideColumn>
          </Client>
        </Window>
      </Desktop>
    </>
  );
}
